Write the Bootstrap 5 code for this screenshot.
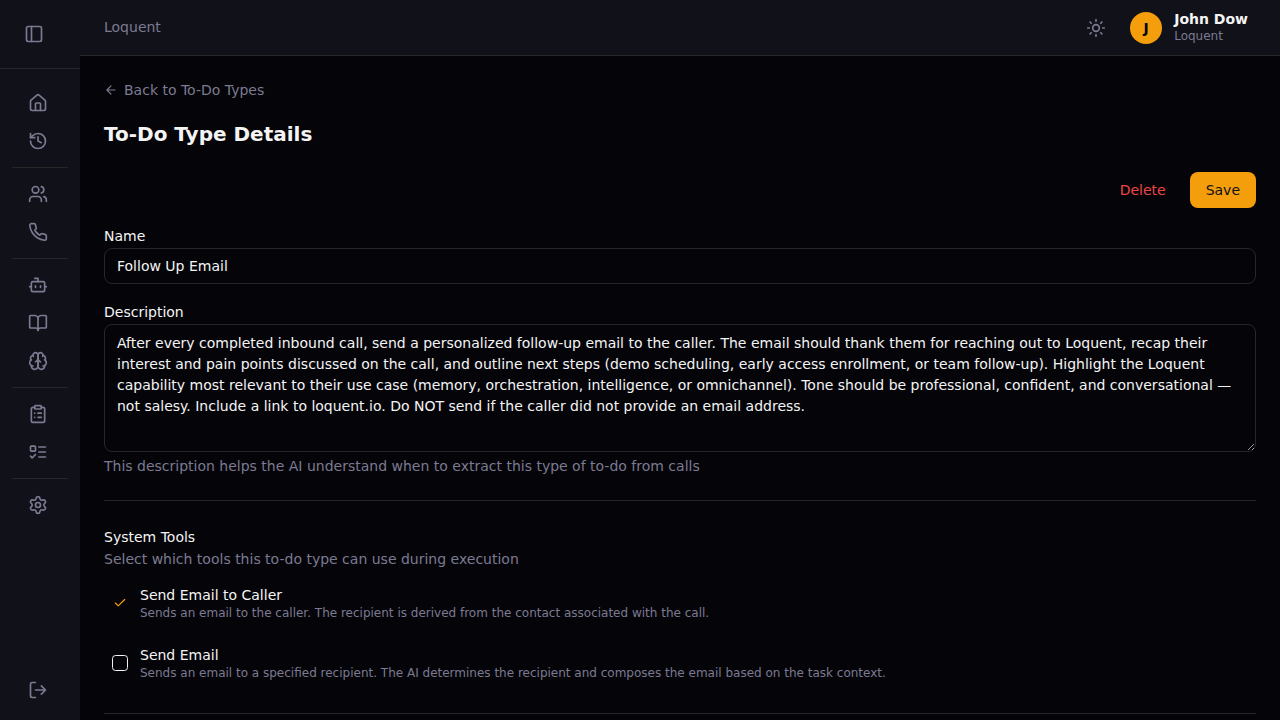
<!DOCTYPE html>
<html lang="en">
<head>
<meta charset="utf-8">
<meta name="viewport" content="width=device-width, initial-scale=1">
<title>To-Do Type Details - Loquent</title>
<link href="https://cdn.jsdelivr.net/npm/bootstrap@5.3.0/dist/css/bootstrap.min.css" rel="stylesheet">
<style>
  :root { --page: #050509; --panel: #111119; --line: #27272a; --ink: #f4f4f5; --mute: #7c7a92; --amber: #f59e0b; }
  body { background: var(--page); color: var(--ink); font-family: "DejaVu Sans", sans-serif; font-size: 14px; line-height: 20px; }
  svg { fill: none; stroke: currentColor; stroke-width: 2; stroke-linecap: round; stroke-linejoin: round; width: 20px; height: 20px; flex: none; }
  a, .muted { color: var(--mute); text-decoration: none; }
  a:hover { color: var(--ink); }
  .icon-btn { color: var(--mute); background: none; border: 0; padding: 8px; display: flex; }
  .sidebar { width: 80px; background: var(--panel); }
  .sidebar-top { border-bottom: 1px solid var(--line); }
  .side-nav { gap: 2px; padding: 16px 12px 12px; }
  .side-item { display: flex; align-items: center; height: 36px; padding: 0 16px; color: var(--mute); background: none; border: 0; }
  hr { border-top: 1px solid var(--line); opacity: 1; margin: 24px 0; }
  .side-nav hr { margin: 6px 0; }
  .topbar { height: 56px; background: var(--panel); border-bottom: 1px solid var(--line); }
  .workspace { line-height: 21px; }
  .avatar { width: 32px; height: 32px; background: var(--amber); color: #050509; }
  .user-name { line-height: 16px; }
  .user-org { font-size: 12px; line-height: 18px; }
  .back { gap: 6px; }
  .back svg { width: 14px; height: 14px; }
  .page-title { font-size: 20px; line-height: 28px; font-weight: 700; margin: 20px 0 24px; }
  .btn { font-size: 14px; line-height: 20px; padding: 8px 16px; border: 0; border-radius: 8px; }
  .btn-save, .btn-save:hover { background: var(--amber); color: #111119; }
  .btn-delete, .btn-delete:hover { color: #ef4444; }
  .form-label { font-size: 14px; line-height: 24px; margin: 0; }
  .form-control, .form-control:focus { background: transparent; color: var(--ink); border: 1px solid var(--line); border-radius: 8px; font-size: 14px; line-height: 20px; padding: 7px 12px; }
  textarea.form-control, textarea.form-control:focus { height: 128px; line-height: 21px; padding-top: 8px; }
  .tool { gap: 12px; padding: 8px; }
  .tool small { font-size: 12px; line-height: 16px; }
  .form-check-input { width: 16px; height: 16px; margin: 0; border: 1px solid var(--ink); border-radius: 4px; background-color: transparent; }
  .form-check-input:checked { border-color: transparent; background-color: transparent; background-size: 14px 14px; background-image: url("data:image/svg+xml,%3Csvg xmlns='http://www.w3.org/2000/svg' viewBox='0 0 24 24' fill='none' stroke='%23f59e0b' stroke-width='2' stroke-linecap='round' stroke-linejoin='round'%3E%3Cpath d='M20 6 9 17l-5-5'/%3E%3C/svg%3E"); }
</style>
</head>
<body>
<div class="d-flex align-items-start">
  <aside class="sidebar d-flex flex-column flex-shrink-0 vh-100 sticky-top">
    <div class="sidebar-top p-3"><button class="icon-btn" type="button" aria-label="Toggle sidebar"><svg viewBox="0 0 24 24"><rect width="18" height="18" x="3" y="3" rx="2"/><path d="M9 3v18"/></svg></button></div>
    <nav class="side-nav d-flex flex-column flex-grow-1" aria-label="Main">
      <a class="side-item" href="#" aria-label="Home"><svg viewBox="0 0 24 24"><path d="M15 21v-8a1 1 0 0 0-1-1h-4a1 1 0 0 0-1 1v8"/><path d="M3 10a2 2 0 0 1 .709-1.528l7-5.999a2 2 0 0 1 2.582 0l7 5.999A2 2 0 0 1 21 10v9a2 2 0 0 1-2 2H5a2 2 0 0 1-2-2z"/></svg></a>
      <a class="side-item" href="#" aria-label="History"><svg viewBox="0 0 24 24"><path d="M3 12a9 9 0 1 0 9-9 9.75 9.75 0 0 0-6.74 2.74L3 8"/><path d="M3 3v5h5"/><path d="M12 7v5l4 2"/></svg></a>
      <hr>
      <a class="side-item" href="#" aria-label="Contacts"><svg viewBox="0 0 24 24"><path d="M16 21v-2a4 4 0 0 0-4-4H6a4 4 0 0 0-4 4v2"/><circle cx="9" cy="7" r="4"/><path d="M22 21v-2a4 4 0 0 0-3-3.87"/><path d="M16 3.13a4 4 0 0 1 0 7.75"/></svg></a>
      <a class="side-item" href="#" aria-label="Calls"><svg viewBox="0 0 24 24"><path d="M22 16.92v3a2 2 0 0 1-2.18 2 19.79 19.79 0 0 1-8.63-3.07 19.5 19.5 0 0 1-6-6 19.79 19.79 0 0 1-3.07-8.67A2 2 0 0 1 4.11 2h3a2 2 0 0 1 2 1.72 12.84 12.84 0 0 0 .7 2.81 2 2 0 0 1-.45 2.11L8.09 9.91a16 16 0 0 0 6 6l1.27-1.27a2 2 0 0 1 2.11-.45 12.84 12.84 0 0 0 2.81.7A2 2 0 0 1 22 16.92z"/></svg></a>
      <hr>
      <a class="side-item" href="#" aria-label="Agents"><svg viewBox="0 0 24 24"><path d="M12 8V4H8"/><rect width="16" height="12" x="4" y="8" rx="2"/><path d="M2 14h2M20 14h2M15 13v2M9 13v2"/></svg></a>
      <a class="side-item" href="#" aria-label="Knowledge"><svg viewBox="0 0 24 24"><path d="M12 7v14"/><path d="M3 18a1 1 0 0 1-1-1V4a1 1 0 0 1 1-1h5a4 4 0 0 1 4 4 4 4 0 0 1 4-4h5a1 1 0 0 1 1 1v13a1 1 0 0 1-1 1h-6a3 3 0 0 0-3 3 3 3 0 0 0-3-3z"/></svg></a>
      <a class="side-item" href="#" aria-label="Memory"><svg viewBox="0 0 24 24"><path d="M12 5a3 3 0 1 0-5.997.125 4 4 0 0 0-2.526 5.77 4 4 0 0 0 .556 6.588A4 4 0 1 0 12 18Z"/><path d="M12 5a3 3 0 1 1 5.997.125 4 4 0 0 1 2.526 5.77 4 4 0 0 1-.556 6.588A4 4 0 1 1 12 18Z"/><path d="M15 13a4.5 4.5 0 0 1-3-4 4.5 4.5 0 0 1-3 4"/><path d="M17.599 6.5a3 3 0 0 0 .399-1.375M6.003 5.125A3 3 0 0 0 6.401 6.5M3.477 10.896a4 4 0 0 1 .585-.396M19.938 10.5a4 4 0 0 1 .585.396M6 18a4 4 0 0 1-1.967-.516M19.967 17.484A4 4 0 0 1 18 18"/></svg></a>
      <hr>
      <a class="side-item" href="#" aria-label="To-dos"><svg viewBox="0 0 24 24"><rect width="8" height="4" x="8" y="2" rx="1"/><path d="M16 4h2a2 2 0 0 1 2 2v14a2 2 0 0 1-2 2H6a2 2 0 0 1-2-2V6a2 2 0 0 1 2-2h2M12 11h4M12 16h4M8 11h.01M8 16h.01"/></svg></a>
      <a class="side-item" href="#" aria-label="To-do types"><svg viewBox="0 0 24 24"><rect x="3" y="5" width="6" height="6" rx="1"/><path d="m3 17 2 2 4-4M13 6h8M13 12h8M13 18h8"/></svg></a>
      <hr>
      <a class="side-item" href="#" aria-label="Settings"><svg viewBox="0 0 24 24"><path d="M9.671 4.136a2.34 2.34 0 0 1 4.659 0 2.34 2.34 0 0 0 3.319 1.915 2.34 2.34 0 0 1 2.33 4.033 2.34 2.34 0 0 0 0 3.831 2.34 2.34 0 0 1-2.33 4.033 2.34 2.34 0 0 0-3.319 1.915 2.34 2.34 0 0 1-4.659 0 2.34 2.34 0 0 0-3.32-1.915 2.34 2.34 0 0 1-2.33-4.033 2.34 2.34 0 0 0 0-3.831A2.34 2.34 0 0 1 6.35 6.051a2.34 2.34 0 0 0 3.319-1.915"/><circle cx="12" cy="12" r="3"/></svg></a>
      <button class="side-item mt-auto" type="button" aria-label="Log out"><svg viewBox="0 0 24 24"><path d="m16 17 5-5-5-5M21 12H9M9 21H5a2 2 0 0 1-2-2V5a2 2 0 0 1 2-2h4"/></svg></button>
    </nav>
  </aside>
  <div class="flex-grow-1">
    <header class="topbar d-flex align-items-center justify-content-between px-4 sticky-top">
      <span class="workspace muted">Loquent</span>
      <div class="d-flex align-items-center gap-3 pe-2">
        <button class="icon-btn" type="button" aria-label="Switch theme"><svg viewBox="0 0 24 24"><circle cx="12" cy="12" r="4"/><path d="M12 2v2M12 20v2M4.93 4.93l1.41 1.41M17.66 17.66l1.41 1.41M2 12h2M20 12h2M6.34 17.66l-1.41 1.41M19.07 4.93l-1.41 1.41"/></svg></button>
        <div class="tool d-flex align-items-center p-0">
          <span class="avatar rounded-circle d-flex align-items-center justify-content-center fw-bold">J</span>
          <div><div class="user-name fw-bold">John Dow</div><div class="user-org muted">Loquent</div></div>
        </div>
      </div>
    </header>
    <main class="px-4 pt-4">
      <div class="d-flex">
        <a class="back d-flex align-items-center" href="#"><svg viewBox="0 0 24 24"><path d="m12 19-7-7 7-7M19 12H5"/></svg>Back to To-Do Types</a>
      </div>
      <h1 class="page-title">To-Do Type Details</h1>
      <form>
        <div class="d-flex justify-content-end gap-2 mb-3">
          <button class="btn btn-delete" type="button">Delete</button>
          <button class="btn btn-save" type="submit">Save</button>
        </div>
        <div class="mb-3">
          <label class="form-label d-block" for="name">Name</label>
          <input class="form-control" id="name" type="text" value="Follow Up Email">
        </div>
        <label class="form-label d-block" for="description">Description</label>
        <textarea class="form-control" id="description" aria-describedby="description-help">After every completed inbound call, send a personalized follow-up email to the caller. The email should thank them for reaching out to Loquent, recap their interest and pain points discussed on the call, and outline next steps (demo scheduling, early access enrollment, or team follow-up). Highlight the Loquent capability most relevant to their use case (memory, orchestration, intelligence, or omnichannel). Tone should be professional, confident, and conversational — not salesy. Include a link to loquent.io. Do NOT send if the caller did not provide an email address.</textarea>
        <div class="muted mt-1" id="description-help">This description helps the AI understand when to extract this type of to-do from calls</div>
        <hr>
        <fieldset>
          <legend class="form-label">System Tools</legend>
          <div class="muted mb-2">Select which tools this to-do type can use during execution</div>
          <div class="d-flex flex-column gap-2">
            <label class="tool d-flex align-items-center" for="tool-caller"><input class="form-check-input flex-shrink-0" id="tool-caller" type="checkbox" checked>
              <span>Send Email to Caller<small class="d-block muted">Sends an email to the caller. The recipient is derived from the contact associated with the call.</small></span></label>
            <label class="tool d-flex align-items-center" for="tool-email"><input class="form-check-input flex-shrink-0" id="tool-email" type="checkbox">
              <span>Send Email<small class="d-block muted">Sends an email to a specified recipient. The AI determines the recipient and composes the email based on the task context.</small></span></label>
          </div>
        </fieldset>
        <hr class="mb-0">
      </form>
    </main>
  </div>
</div>
<script src="https://cdn.jsdelivr.net/npm/bootstrap@5.3.0/dist/js/bootstrap.bundle.min.js"></script>
</body>
</html>
